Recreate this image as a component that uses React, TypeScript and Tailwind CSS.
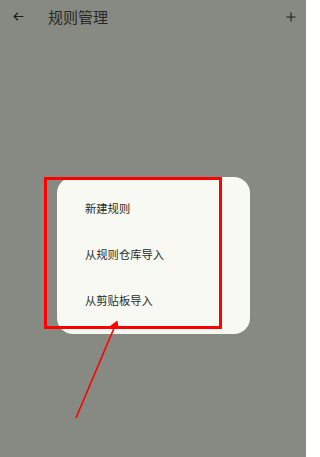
import React from 'react';

const menuItems = ['新建规则', '从规则仓库导入', '从剪贴板导入'];

export default function App() {
  return (
    <div
      className="relative w-[306px] h-[457px] overflow-hidden bg-[#878983]"
      style={{ fontFamily: '"Noto Sans CJK SC", "Noto Sans", sans-serif' }}
    >
      {/* top bar */}
      <div className="flex items-center h-[33px] pl-[12px] pr-[9px] text-[#1d1f1b]">
        <svg width="13" height="13" viewBox="0 0 24 24" fill="none" stroke="currentColor" strokeWidth="2.2">
          <path d="M21 12H4M11 5l-7 7 7 7" />
        </svg>
        <span className="ml-[23px] text-[15px] leading-none text-[#262824]">规则管理</span>
        <svg className="ml-auto" width="12" height="12" viewBox="0 0 24 24" fill="none" stroke="currentColor" strokeWidth="2.2">
          <path d="M12 3v18M3 12h18" />
        </svg>
      </div>

      {/* popup menu */}
      <div className="absolute left-[57px] top-[177px] w-[193px] h-[157px] rounded-[16px] bg-[#f7f9f2] flex flex-col pt-2">
        {menuItems.map((item) => (
          <div key={item} className="h-[46px] flex items-center pl-[28px] text-[11.3px] text-[#2a2c28]">
            {item}
          </div>
        ))}
      </div>

      {/* annotation box */}
      <div className="absolute left-[44px] top-[177px] w-[178px] h-[152px] border-[3px] border-[#ff0000]" />

      {/* annotation arrow */}
      <svg className="absolute left-0 top-0" width="306" height="457" viewBox="0 0 306 457">
        <line x1="76" y1="418" x2="114.5" y2="327" stroke="#ff0000" strokeWidth="1.6" />
        <path d="M117.5 320.5 L110 326 L118.5 328.5 Z" fill="#ff0000" />
      </svg>
    </div>
  );
}
